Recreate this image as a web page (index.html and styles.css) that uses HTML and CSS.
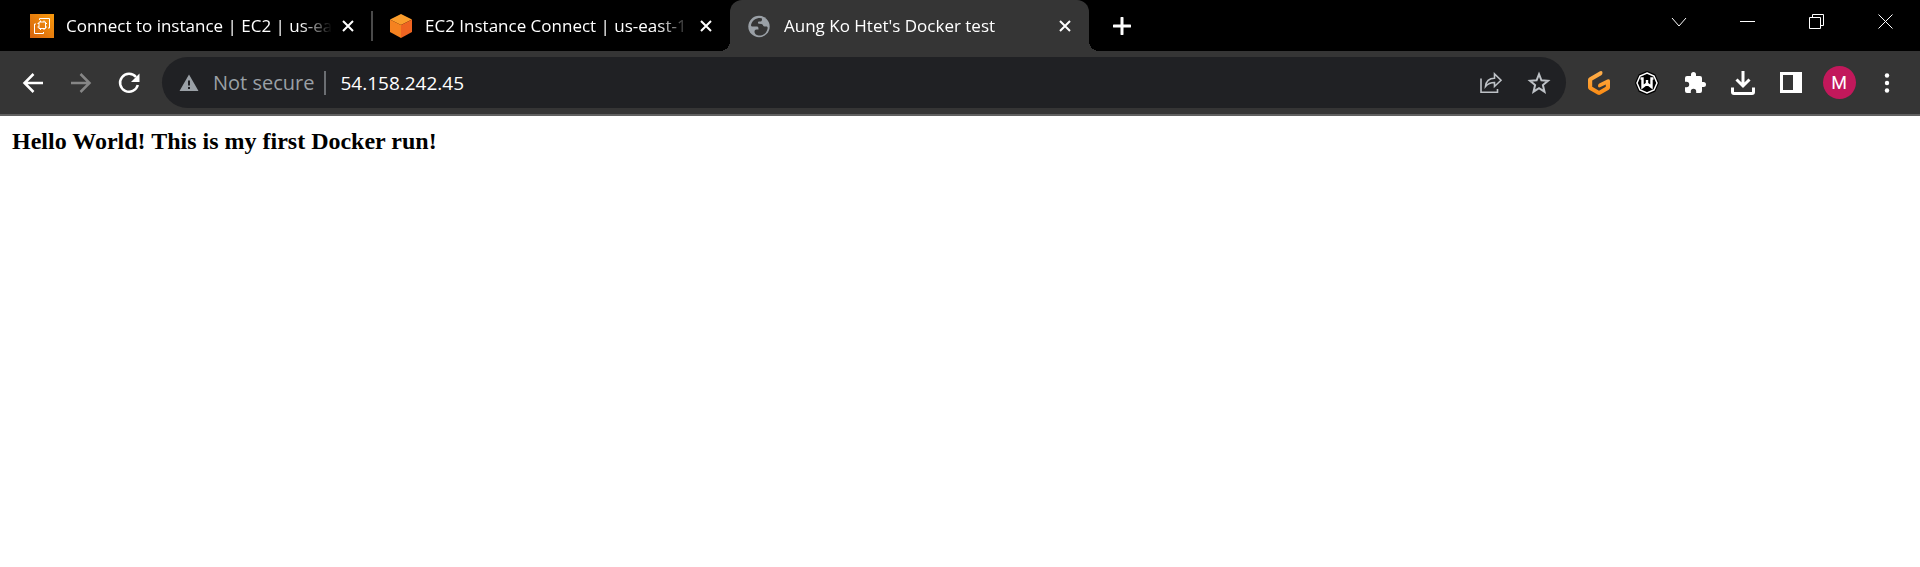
FILE: index.html
```html
<!DOCTYPE html>
<html lang="en">
<head>
<meta charset="utf-8">
<title>Aung Ko Htet's Docker test</title>
<link rel="stylesheet" href="styles.css">
</head>
<body>
<header class="browser">
  <div class="tab-strip">
    <div class="tabs">
      <div class="tab">
        <svg class="favicon" viewBox="0 0 24 24" aria-hidden="true">
          <defs><linearGradient id="ec2" x1="0" y1="1" x2="1" y2="0"><stop offset="0" stop-color="#d4620f"/><stop offset="1" stop-color="#f99a0c"/></linearGradient></defs>
          <path fill="url(#ec2)" d="M0 0h24v24H0z"/>
          <g fill="none" stroke="#fff" stroke-width="1"><path d="M9 8h6.500v6.500H9zM10.500 8V6.500M14 8V6.500M10.500 14.500V16M14 14.500V16M9 9.500H7.500M9 13H7.500M15.500 9.500H17M15.500 13H17"/><path d="M9.500 6V4.500h10v9.500H18M6 10H4.500v9.500h9V18"/></g>
        </svg>
        <span class="tab-title">Connect to instance | EC2 | us-ea</span>
        <button class="tab-close" aria-label="Close tab"><svg viewBox="0 0 12 12"><path d="M1 1l10 10M11 1L1 11"/></svg></button>
      </div>
      <div class="tab divided">
        <svg class="favicon" viewBox="0 0 24 24" aria-hidden="true"><path fill="#fb9d2c" d="M12 0l11 5.500L12 11 1 5.500z"/><path fill="#f58220" d="M1 5.500L12 11v13L1 18z"/><path fill="#ef6421" d="M23 5.500L12 11v13l11-6z"/></svg>
        <span class="tab-title">EC2 Instance Connect | us-east-1</span>
        <button class="tab-close" aria-label="Close tab"><svg viewBox="0 0 12 12"><path d="M1 1l10 10M11 1L1 11"/></svg></button>
      </div>
      <div class="tab active">
        <svg class="favicon" viewBox="0 0 24 24" aria-hidden="true"><circle cx="11" cy="12.500" r="10.700" fill="#9aa0a6"/><path fill="#353535" d="M12 4c-4 0-8 2.500-9 7 0 1 .5 1.500 2 1.500h4c1.500 0 1.500 1.500 1.500 3H8.500c-1.500 0-2 1-2 2.500s1.500 3 4 3.500c5 .5 8-2.500 9-6.500.4-1.500 0-2.500-1-2.500h-2c-1.500 0-1-2-3-2.500l-2.500-.3c-1.500-.2-1.500-2.200.5-2.200h1c1.500 0 1.500-1.500 1.500-3z"/></svg>
        <span class="tab-title">Aung Ko Htet's Docker test</span>
        <button class="tab-close" aria-label="Close tab"><svg viewBox="0 0 12 12"><path d="M1 1l10 10M11 1L1 11"/></svg></button>
      </div>
    </div>
    <button class="new-tab" aria-label="New tab"><svg viewBox="0 0 18 18"><path d="M9 1v16M1 9h16"/></svg></button>
    <div class="window-controls">
      <button aria-label="Search tabs"><svg viewBox="0 0 16 16"><path d="M1 4l7 8 7-8"/></svg></button>
      <button aria-label="Minimize"><svg viewBox="0 0 16 16"><path d="M0 7.500h15"/></svg></button>
      <button aria-label="Restore"><svg viewBox="0 0 16 16"><path d="M.5 3.500h11v11H.5zM3.500 3.500v-3h11v11h-3"/></svg></button>
      <button aria-label="Close window"><svg viewBox="0 0 16 16"><path d="M.5.500l14 14M14.500.500l-14 14"/></svg></button>
    </div>
  </div>

  <div class="toolbar">
    <nav class="buttons">
      <button class="tool" aria-label="Back"><svg viewBox="0 0 24 24"><path class="line" d="M22 12H4M12.500 3L3.500 12l9 9"/></svg></button>
      <button class="tool" aria-label="Forward" disabled><svg viewBox="0 0 24 24"><path class="line" d="M2 12h18M11.500 3l9 9-9 9"/></svg></button>
      <button class="tool" aria-label="Reload"><svg viewBox="0 0 24 24"><path class="line" d="M19 6A9 9 0 1 0 20.800 14"/><path fill="currentColor" d="M22.500 2.500v8.500H14z"/></svg></button>
    </nav>
    <form class="omnibox">
      <svg class="warning" viewBox="0 0 20 20" aria-hidden="true"><path fill="currentColor" fill-rule="evenodd" d="M10 1.500L19.500 18H.5zM9 7.500v5h2v-5zm0 6.500v2h2v-2z"/></svg>
      <label class="security" for="address">Not secure</label>
      <input class="address" id="address" type="text" value="54.158.242.45" spellcheck="false">
      <button class="tool muted" type="button" aria-label="Share"><svg viewBox="0 0 24 24"><path class="thin" d="M2 7.500v13.800h16.500V18"/><path class="thin" d="M6.500 15.500c.5-5 3.500-8.300 9-8.300V3l6.500 6.300-6.500 6.200v-4c-4.500 0-6.500 1-9 4z"/></svg></button>
      <button class="tool muted" type="button" aria-label="Bookmark"><svg viewBox="0 0 24 24"><path fill="none" stroke="currentColor" stroke-width="2" d="M12 3.200l2.400 6.100 6.600.5-5.100 4.300 1.600 6.600-5.500-3.600-5.500 3.600 1.600-6.600L3 9.800l6.600-.5z"/></svg></button>
    </form>
    <div class="buttons">
      <button class="tool" aria-label="G extension"><svg viewBox="0 0 24 24"><defs><linearGradient id="gold" x1="0" y1="0" x2="0" y2="1"><stop offset="0" stop-color="#ffb04d"/><stop offset="1" stop-color="#fb8b12"/></linearGradient></defs><path fill="url(#gold)" d="M13 .3q2.500-1 2.500 1.500 0 1.700-1.200 2.500L5.200 9.500v6.300l6.800 4 6.800-4v-2.300l-5.300 2.600q-2.500 1-2.500-1 0-1.800 1.300-2.600l8-4q2.700-1.200 2.700 1.500v6.500q0 1.500-1.200 2.200l-8.300 4.800q-1.500.8-3 0l-8.300-4.800Q1 18 1 16.500V8.800Q1 7.300 2.300 6.500z"/></svg></button>
      <button class="tool" aria-label="W extension"><svg viewBox="0 0 24 24"><path fill="#000" stroke="#000" stroke-width="2" d="M12 1l7.500 3L23 12l-3.500 8L12 23l-7.500-3L1 12l3.500-8z"/><path fill="none" stroke="#fff" stroke-width="1.500" d="M12 2l7 3 3 7-3 7-7 3-7-3-3-7 3-7z"/><path fill="none" stroke="#fff" stroke-width="2.400" d="M5.500 7.500h2v8.500L12 12.500l4.500 3.500V7.500h2M12 13V9"/></svg></button>
      <button class="tool" aria-label="Extensions"><svg viewBox="0 0 24 24"><path fill="currentColor" d="M20.500 11H19V7a2 2 0 0 0-2-2h-4V3.500a2.500 2.500 0 0 0-5 0V5H4a2 2 0 0 0-2 2v3.800h1.500a2.700 2.700 0 0 1 0 5.400H2V20a2 2 0 0 0 2 2h3.800v-1.500a2.700 2.700 0 0 1 5.400 0V22H17a2 2 0 0 0 2-2v-4h1.500a2.500 2.500 0 0 0 0-5z"/></svg></button>
      <button class="tool" aria-label="Downloads"><svg viewBox="0 0 24 24"><path fill="none" stroke="currentColor" stroke-width="3" d="M12 0v14M5.500 8.500L12 15l6.500-6.500M1.500 16.500v4.500q0 1.500 1.500 1.500h18q1.500 0 1.500-1.500v-4.500"/></svg></button>
      <button class="tool" aria-label="Side panel"><svg viewBox="0 0 24 24"><path fill="currentColor" fill-rule="evenodd" d="M1 1h22v21H1zM4 4v15h10V4z"/></svg></button>
      <button class="tool" aria-label="Profile"><span class="avatar">M</span></button>
      <button class="tool" aria-label="Menu"><svg viewBox="0 0 24 24"><g fill="currentColor"><circle cx="12" cy="4.500" r="2.200"/><circle cx="12" cy="12" r="2.200"/><circle cx="12" cy="19.500" r="2.200"/></g></svg></button>
    </div>
  </div>
</header>
<main class="page">
  <h1 class="greeting">Hello World! This is my first Docker run!</h1>
</main>
</body>
</html>
```
FILE: styles.css
```css
* { box-sizing: border-box; }

body {
  margin: 0;
  background: #fff;
  color: #000;
}

button {
  display: flex;
  align-items: center;
  justify-content: center;
  padding: 0;
  border: 0;
  background: none;
  color: #fff;
}

.browser {
  font-family: "Open Sans", "Noto Sans", sans-serif;
  color: #fff;
}

.tab-strip {
  display: flex;
  height: 51px;
  padding-left: 12px;
  background: #000;
}

.tabs { display: flex; }

.tab {
  position: relative;
  display: flex;
  align-items: center;
  width: 359px;
  padding: 0 12px 0 18px;
}

.divided::before {
  content: "";
  position: absolute;
  left: 0;
  top: 11px;
  width: 2px;
  height: 30px;
  background: #4a4a4a;
}

.active {
  background: #353535;
  border-radius: 12px 12px 0 0;
}

/* Outward curves where the active tab meets the toolbar */
.active::before,
.active::after {
  content: "";
  position: absolute;
  bottom: 0;
  width: 10px;
  height: 10px;
}

.active::before {
  right: 100%;
  background: radial-gradient(circle at 0 0, transparent 10px, #353535 10px);
}

.active::after {
  left: 100%;
  background: radial-gradient(circle at 100% 0, transparent 10px, #353535 10px);
}

.favicon {
  flex: none;
  width: 24px;
  height: 24px;
}

.tab-title {
  flex: 1;
  margin-left: 12px;
  font-size: 17px;
  line-height: 24px;
  white-space: nowrap;
  mask-image: linear-gradient(to left, transparent, #000 32px);
}

.tab-close {
  flex: none;
  width: 24px;
  height: 24px;
  margin-left: 4px;
}

.tab-close svg {
  width: 12px;
  height: 12px;
  fill: none;
  stroke: currentColor;
  stroke-width: 2;
}

.new-tab {
  width: 66px;
}

.new-tab svg {
  width: 18px;
  height: 18px;
  stroke: currentColor;
  stroke-width: 3;
  stroke-linecap: round;
}

.window-controls {
  display: flex;
  height: 43px;
  margin-left: auto;
}

.window-controls button { width: 69px; }

.window-controls svg {
  width: 16px;
  height: 16px;
  fill: none;
  stroke: currentColor;
  stroke-width: 1;
}

.toolbar {
  display: flex;
  align-items: center;
  gap: 9px;
  padding: 6px 9px;
  border-bottom: 2px solid #606060;
  background: #353535;
}

.buttons { display: flex; }

.tool {
  width: 48px;
  height: 48px;
}

.tool svg {
  width: 24px;
  height: 24px;
}

.tool:disabled { color: #868686; }

.muted { color: #bdc1c6; }

.line {
  fill: none;
  stroke: currentColor;
  stroke-width: 2.5;
}

.thin {
  fill: none;
  stroke: currentColor;
  stroke-width: 1.6;
}

.omnibox {
  display: flex;
  flex: 1;
  align-items: center;
  height: 51px;
  padding: 0 3px 0 17px;
  border-radius: 26px;
  background: #202124;
}

.warning {
  width: 20px;
  height: 20px;
  color: #9aa0a6;
}

.security {
  margin-left: 14px;
  padding-right: 10px;
  border-right: 2px solid #6b6e72;
  color: #9aa0a6;
  font-size: 20px;
  line-height: 24px;
}

.address {
  flex: 1;
  min-width: 0;
  padding: 0 0 0 14px;
  border: 0;
  outline: 0;
  background: none;
  color: #fff;
  font-family: inherit;
  font-size: 19px;
}

.avatar {
  width: 33px;
  border-radius: 50%;
  background: #c2185b;
  font-family: Roboto, sans-serif;
  font-size: 18px;
  line-height: 33px;
  text-align: center;
}

.page { padding: 12px; }

.greeting {
  margin: 0;
  font-family: "Liberation Serif", "Times New Roman", serif;
  font-size: 24px;
  line-height: 26px;
}
```
